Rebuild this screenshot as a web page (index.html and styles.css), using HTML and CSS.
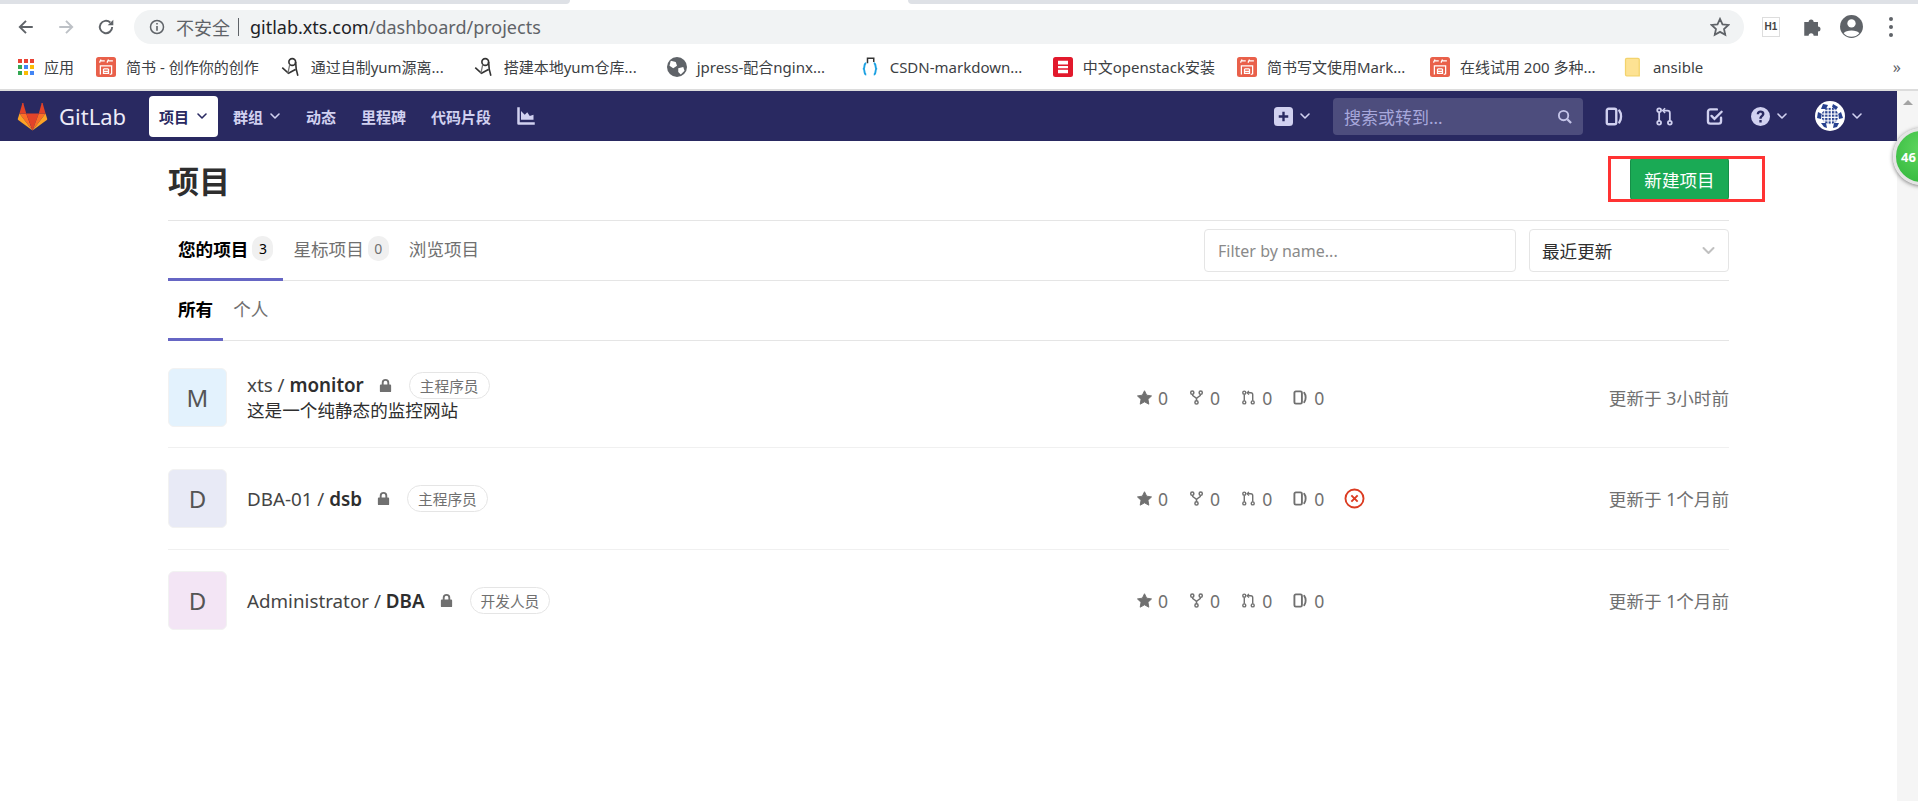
FILE: index.html
```html
<!DOCTYPE html>
<html lang="zh-CN">
<head>
  <meta charset="UTF-8">
  <title>项目 · GitLab</title>
  <link rel="stylesheet" href="styles.css">
</head>
<body>

<svg class="sprites" width="0" height="0">
  <symbol id="i-issues" viewBox="0 0 16 16"><path d="M3 1.500h5A1.500 1.500 0 0 1 9.500 3v10A1.500 1.500 0 0 1 8 14.500H3A1.500 1.500 0 0 1 1.500 13V3A1.500 1.500 0 0 1 3 1.500z" fill="none" stroke="currentColor" stroke-width="2"/><path d="M12 3c2 2.500 2 7.500 0 10" fill="none" stroke="currentColor" stroke-width="2" stroke-linecap="round"/></symbol>
  <symbol id="i-mr" viewBox="0 0 16 16"><g fill="none" stroke="currentColor" stroke-width="1.500"><circle cx="3.500" cy="2.800" r="1.600"/><circle cx="3.500" cy="13.200" r="1.600"/><circle cx="12.500" cy="13.200" r="1.600"/><path d="M3.500 4.500v7M12.500 11.500V5a2 2 0 0 0-2-2H7"/><path d="M8.500 1L6.500 3l2 2" stroke-width="1.300"/></g></symbol>
  <symbol id="i-todo" viewBox="0 0 16 16"><path d="M13.500 9v3a2 2 0 0 1-2 2h-7a2 2 0 0 1-2-2V4a2 2 0 0 1 2-2H10" fill="none" stroke="currentColor" stroke-width="2" stroke-linecap="round"/><path d="M5.500 7.500L8 10l6-6" fill="none" stroke="currentColor" stroke-width="2" stroke-linecap="round"/></symbol>
  <symbol id="i-chevron" viewBox="0 0 12 12"><path d="M2 4l4 4 4-4" fill="none" stroke="currentColor" stroke-width="1.600" stroke-linecap="round" stroke-linejoin="round"/></symbol>
  <symbol id="i-lock" viewBox="0 0 16 16"><path d="M3 7h1V5a4 4 0 0 1 8 0v2h1a1 1 0 0 1 1 1v6a1 1 0 0 1-1 1H3a1 1 0 0 1-1-1V8a1 1 0 0 1 1-1zm3 0h4V5a2 2 0 0 0-4 0z" fill="currentColor" fill-rule="evenodd"/></symbol>
  <symbol id="i-star" viewBox="0 0 16 16"><path d="M8 .8l2.300 4.700 5.200.8-3.800 3.600.9 5.200L8 12.600l-4.600 2.500.9-5.200L.5 6.300l5.200-.8z" fill="currentColor" stroke="currentColor" stroke-linejoin="round"/></symbol>
  <symbol id="i-fork" viewBox="0 0 16 16"><g fill="none" stroke="currentColor" stroke-width="1.600"><circle cx="3.500" cy="2.800" r="1.700"/><circle cx="12.500" cy="2.800" r="1.700"/><circle cx="8" cy="13.200" r="1.700"/><path d="M3.500 4.500c0 3 4.500 2.500 4.500 5v2M12.500 4.500c0 3-4.500 2.500-4.500 5"/></g></symbol>
  <symbol id="i-bm-jianshu" viewBox="0 0 16 16"><rect width="16" height="16" rx="2" fill="#e9604a"/><path d="M3.500 6.500V14M3.500 7h9v6.500l-1.500.5M6 9.500h4M6 11.500h4M6 9.500v3.500h4V9.500M4 2L2.800 4.500M4 3h3M10 2L8.800 4.500M10 3h3.500" fill="none" stroke="#fff" stroke-width="1"/></symbol>
  <symbol id="i-bm-feather" viewBox="0 0 16 16"><circle cx="9" cy="4" r="2.700" fill="none" stroke="#333" stroke-width="1.300"/><path d="M11.700 4c0 4 .5 7 1.800 11M1 8.500l5 4.500 5.500-3" fill="none" stroke="#333" stroke-width="1.300"/><path d="M7 6L5.500 13" stroke="#777" stroke-width="1"/></symbol>
</svg>

<div class="tabstrip"><span class="tab-active"></span></div>

<div class="toolbar">
  <svg class="tb-icon" viewBox="0 0 16 16"><path d="M14 8H3M8 2.500L2.500 8 8 13.500" fill="none" stroke="#5f6368" stroke-width="1.700"/></svg>
  <svg class="tb-icon" viewBox="0 0 16 16"><path d="M2 8h11M8 2.500L13.500 8 8 13.500" fill="none" stroke="#bdc1c6" stroke-width="1.700"/></svg>
  <svg class="tb-icon" viewBox="0 0 16 16"><path d="M13.500 8A5.500 5.500 0 1 1 11.800 4" fill="none" stroke="#5f6368" stroke-width="1.700"/><path d="M14.500 1.500v5h-5z" fill="#5f6368"/></svg>
  <div class="omnibox">
    <svg class="omni-info" viewBox="0 0 16 16"><circle cx="8" cy="8" r="6.500" fill="none" stroke="#5f6368" stroke-width="1.500"/><path d="M7.200 7h1.600v4.800H7.200zM7.200 4h1.600v1.600H7.200z" fill="#5f6368"/></svg>
    <span class="omni-warn">不安全</span><span class="omni-sep"></span>
    <span class="omni-url"><b>gitlab.xts.com</b>/dashboard/projects</span>
    <svg class="omni-star" viewBox="0 0 16 16"><path d="M8 1.500l2 4.400 4.700.5-3.500 3.200 1 4.700L8 11.900l-4.200 2.400 1-4.700L1.300 6.400 6 5.900z" fill="none" stroke="#5f6368" stroke-width="1.400"/></svg>
  </div>
  <span class="ext-h1">H1</span>
  <svg class="tb-puzzle" viewBox="0 0 16 16"><path d="M1 4h3.500a2 2 0 1 1 4 0H12v3.500a2 2 0 1 1 0 4V15H8.500a2 2 0 1 0-4 0H1z" fill="#5f6368"/></svg>
  <svg class="tb-profile" viewBox="0 0 24 24"><circle cx="12" cy="12" r="11" fill="#5f6368"/><circle cx="12" cy="9" r="4" fill="#fff"/><path d="M4.500 18.500c2-3.500 13-3.500 15 0a10 10 0 0 1-15 0z" fill="#fff"/></svg>
  <span class="tb-dots"><i></i><i></i><i></i></span>
</div>

<div class="bookmarks">
  <span class="bm"><span class="apps-grid"><i class="r"></i><i class="r"></i><i class="r"></i><i class="g"></i><i class="b"></i><i class="y"></i><i class="g"></i><i class="y"></i><i class="b"></i></span>应用</span>
  <span class="bm"><svg class="bm-icon"><use href="#i-bm-jianshu"/></svg>简书 - 创作你的创作</span>
  <span class="bm bm-long"><svg class="bm-icon"><use href="#i-bm-feather"/></svg>通过自制yum源离...</span>
  <span class="bm bm-long"><svg class="bm-icon"><use href="#i-bm-feather"/></svg>搭建本地yum仓库...</span>
  <span class="bm bm-long"><svg class="bm-icon" viewBox="0 0 16 16"><circle cx="8" cy="8" r="8" fill="#5f6368"/><path d="M3 3l4 1 1 3-3 2-3-2zM9 9l4-1 1 3-3 3-2-2z" fill="#fff"/></svg>jpress-配合nginx...</span>
  <span class="bm bm-long"><svg class="bm-icon" viewBox="0 0 16 16"><path d="M5 5c-2 0-1 3-2 4.500 1 1 0 4.500 2 4.500M11 5c2 0 1 3 2 4.500-1 1 0 4.500-2 4.500" fill="none" stroke="#1ba1e2" stroke-width="1.500"/><path d="M6 5V1h5v3" fill="none" stroke="#333" stroke-width="1.200"/></svg>CSDN-markdown...</span>
  <span class="bm"><svg class="bm-icon" viewBox="0 0 16 16"><rect width="16" height="16" rx="2" fill="#e2192c"/><rect x="4" y="3" width="8" height="10" fill="#fff"/><path d="M0 6.500h16M0 9.500h16" stroke="#e2192c" stroke-width="1.200"/></svg>中文openstack安装</span>
  <span class="bm bm-long"><svg class="bm-icon"><use href="#i-bm-jianshu"/></svg>简书写文使用Mark...</span>
  <span class="bm bm-long"><svg class="bm-icon"><use href="#i-bm-jianshu"/></svg>在线试用 200 多种...</span>
  <span class="bm"><svg class="bm-icon" viewBox="0 0 16 16"><path d="M2 2a1 1 0 0 1 1-1h9a1 1 0 0 1 1 1v13H3a1 1 0 0 1-1-1z" fill="#fde293" stroke="#f3d36c"/></svg>ansible</span>
  <span class="bm-more">»</span>
</div>

<div class="app">
  <div class="app-main">
    <nav class="navbar">
      <svg class="logo" viewBox="0 0 32 30">
        <path d="M16 29.500L2.500 12h7z" fill="#fc6d26"/>
        <path d="M2.500 12L5.500 1.400c.2-.5.800-.5 1 0L9.500 12z" fill="#e24329"/>
        <path d="M16 29.500L9.500 12h13z" fill="#e24329"/>
        <path d="M16 29.500L22.500 12h7z" fill="#fc6d26"/>
        <path d="M16 29.500l14.800-10.800a1.200 1.200 0 0 0 .4-1.300L29.500 12z" fill="#fca326"/>
        <path d="M2.500 12l-1.700 5.400a1.200 1.200 0 0 0 .4 1.300L16 29.500z" fill="#fca326"/>
        <path d="M29.500 12L26.500 1.400c-.2-.5-.8-.5-1 0L22.500 12z" fill="#e24329"/>
      </svg>
      <span class="brand">GitLab</span>
      <a class="nav-item active">项目<svg class="chev"><use href="#i-chevron"/></svg></a>
      <a class="nav-item">群组<svg class="chev"><use href="#i-chevron"/></svg></a>
      <a class="nav-item">动态</a>
      <a class="nav-item">里程碑</a>
      <a class="nav-item">代码片段</a>
      <a class="nav-item"><svg class="nav-chart" viewBox="0 0 16 16"><path d="M1 1h2v12h12v2H2a1 1 0 0 1-1-1z" fill="currentColor"/><path d="M4 11V4l3 3 2-2 2 3 3-1v4z" fill="currentColor"/></svg></a>
      <div class="nav-right">
        <span class="nav-plus"><svg class="nav-ico" viewBox="0 0 16 16"><path fill-rule="evenodd" d="M3 0h10a3 3 0 0 1 3 3v10a3 3 0 0 1-3 3H3a3 3 0 0 1-3-3V3a3 3 0 0 1 3-3zm4 4v3H4v2h3v3h2V9h3V7H9V4z" fill="currentColor"/></svg><svg class="chev"><use href="#i-chevron"/></svg></span>
        <div class="search">
          <span>搜索或转到...</span>
          <svg class="search-ico" viewBox="0 0 16 16"><circle cx="7" cy="7" r="5" fill="none" stroke="currentColor" stroke-width="2"/><path d="M11 11l4 4" stroke="currentColor" stroke-width="2.400"/></svg>
        </div>
        <svg class="nav-ico ico-issues"><use href="#i-issues"/></svg>
        <svg class="nav-ico ico-mr"><use href="#i-mr"/></svg>
        <svg class="nav-ico ico-todo"><use href="#i-todo"/></svg>
        <span class="nav-help"><svg class="nav-ico" viewBox="0 0 16 16"><path fill-rule="evenodd" d="M8 0a8 8 0 1 1 0 16A8 8 0 0 1 8 0zM7 11v2h2v-2zM4.800 6h2c.1-.8.500-1.200 1.200-1.200s1.200.4 1.200 1c0 1.300-2.200 1.400-2.200 4h2c0-1.800 2.300-2 2.300-4.200C11.300 3.900 9.900 3 8 3 6.100 3 4.900 4.100 4.800 6z" fill="currentColor"/></svg><svg class="chev"><use href="#i-chevron"/></svg></span>
        <span class="nav-user">
          <svg class="user-avatar" viewBox="0 0 30 30">
            <defs>
              <pattern id="lattice" width="3.400" height="3.400" patternUnits="userSpaceOnUse"><rect width="3.400" height="3.400" fill="#fff"/><rect width="2.200" height="2.200" fill="#27418f"/></pattern>
            </defs>
            <circle cx="15" cy="15" r="15" fill="#fff"/>
            <path d="M8 3l5 1-2 4-5 0zM18 3l5 3-2 3-4-3zM3 11l4 2-1 5-4-1zM26 11l2 6-4 1-1-5zM6 22l5 0 1 5-3-1zM19 22l5 0-2 4-4 1z" fill="#27418f"/>
            <circle cx="15" cy="15" r="8.500" fill="url(#lattice)"/>
          </svg>
          <svg class="chev"><use href="#i-chevron"/></svg>
        </span>
      </div>
    </nav>

    <main class="page">
      <header class="page-head">
        <h1>项目</h1>
        <a class="btn-new">新建项目</a>
      </header>

      <div class="tabs-row">
        <ul class="tabs">
          <li class="on">您的项目<span class="badge">3</span></li>
          <li>星标项目<span class="badge">0</span></li>
          <li>浏览项目</li>
        </ul>
        <div class="filters">
          <div class="filter-input">Filter by name...</div>
          <div class="filter-select">最近更新<svg class="chev"><use href="#i-chevron"/></svg></div>
        </div>
      </div>

      <ul class="tabs tabs-sub">
        <li class="on">所有</li>
        <li>个人</li>
      </ul>

      <ul class="projects">
        <li class="project">
          <span class="avatar av-blue">M</span>
          <div class="project-info">
            <div class="project-title">
              <span class="name">xts / <b>monitor</b></span>
              <svg class="lock"><use href="#i-lock"/></svg>
              <span class="role">主程序员</span>
            </div>
            <p class="desc">这是一个纯静态的监控网站</p>
          </div>
          <div class="stats">
            <span class="stat"><svg><use href="#i-star"/></svg>0</span>
            <span class="stat"><svg><use href="#i-fork"/></svg>0</span>
            <span class="stat"><svg><use href="#i-mr"/></svg>0</span>
            <span class="stat"><svg><use href="#i-issues"/></svg>0</span>
            <span class="ci-slot"></span>
          </div>
          <span class="updated">更新于 3小时前</span>
        </li>
        <li class="project">
          <span class="avatar av-indigo">D</span>
          <div class="project-info">
            <div class="project-title">
              <span class="name">DBA-01 / <b>dsb</b></span>
              <svg class="lock"><use href="#i-lock"/></svg>
              <span class="role">主程序员</span>
            </div>
          </div>
          <div class="stats">
            <span class="stat"><svg><use href="#i-star"/></svg>0</span>
            <span class="stat"><svg><use href="#i-fork"/></svg>0</span>
            <span class="stat"><svg><use href="#i-mr"/></svg>0</span>
            <span class="stat"><svg><use href="#i-issues"/></svg>0</span>
            <span class="ci-slot"><svg viewBox="0 0 20 20"><circle cx="10" cy="10" r="8.600" fill="none" stroke="#db3b21" stroke-width="1.800"/><path d="M7 7l6 6M13 7l-6 6" stroke="#db3b21" stroke-width="1.800"/></svg></span>
          </div>
          <span class="updated">更新于 1个月前</span>
        </li>
        <li class="project">
          <span class="avatar av-pink">D</span>
          <div class="project-info">
            <div class="project-title">
              <span class="name">Administrator / <b>DBA</b></span>
              <svg class="lock"><use href="#i-lock"/></svg>
              <span class="role">开发人员</span>
            </div>
          </div>
          <div class="stats">
            <span class="stat"><svg><use href="#i-star"/></svg>0</span>
            <span class="stat"><svg><use href="#i-fork"/></svg>0</span>
            <span class="stat"><svg><use href="#i-mr"/></svg>0</span>
            <span class="stat"><svg><use href="#i-issues"/></svg>0</span>
            <span class="ci-slot"></span>
          </div>
          <span class="updated">更新于 1个月前</span>
        </li>
      </ul>
    </main>
  </div>

  <div class="scrollbar"><span class="scroll-up"></span></div>
  <span class="float-ball">46</span>
  <span class="red-box"></span>
</div>

</body>
</html>
```

FILE: styles.css
```css
* {
  box-sizing: border-box;
}

html, body {
  height: 100%;
}

body {
  margin: 0;
  font-family: "Noto Sans", "Noto Sans CJK SC", sans-serif;
  font-size: 14px;
  color: #2e2e2e;
  background: #fff;
  overflow: hidden;
  display: flex;
  flex-direction: column;
}

.sprites {
  position: absolute;
}

ul {
  list-style: none;
  margin: 0;
  padding: 0;
}

/* browser frame */
.tabstrip {
  height: 9px;
  flex: none;
  display: flex;
}

.tabstrip::before,
.tabstrip::after {
  content: "";
  height: 4px;
  background: #dee1e6;
}

.tabstrip::before {
  width: 570px;
  border-bottom-right-radius: 5px;
}

.tabstrip::after {
  flex: 1;
  border-bottom-left-radius: 5px;
}

.tab-active {
  width: 338px;
}

.toolbar {
  height: 35px;
  flex: none;
  display: flex;
  align-items: center;
  padding-left: 17px;
}

.tb-icon {
  width: 18px;
  height: 18px;
  margin-right: 22px;
}

.tb-icon:nth-child(3) {
  margin-right: 19px;
}

.omnibox {
  width: 1610px;
  height: 34px;
  border-radius: 17px;
  background: #f1f3f4;
  display: flex;
  align-items: center;
  padding: 0 14px 0 15px;
  font-size: 18px;
  color: #5f6368;
}

.omni-info {
  width: 16px;
  height: 16px;
  margin-right: 11px;
}

.omni-sep {
  width: 1px;
  height: 18px;
  background: #5f6368;
  margin: 0 11px 0 8px;
}

.omni-url b {
  font-weight: 400;
  color: #202124;
}

.omni-star {
  width: 20px;
  height: 20px;
  margin-left: auto;
}

.ext-h1 {
  width: 18px;
  height: 20px;
  margin-left: 18px;
  border: 1px solid #ddd;
  font: bold 10px/18px "Liberation Sans", sans-serif;
  text-align: center;
  color: #444;
}

.tb-puzzle {
  width: 20px;
  height: 20px;
  margin-left: 23px;
}

.tb-profile {
  width: 25px;
  height: 25px;
  margin-left: 16px;
}

.tb-dots {
  display: flex;
  flex-direction: column;
  gap: 4px;
  margin-left: 25px;
}

.tb-dots i {
  width: 4px;
  height: 4px;
  border-radius: 50%;
  background: #5f6368;
}

.bookmarks {
  height: 47px;
  flex: none;
  display: flex;
  align-items: center;
  padding-left: 18px;
  border-bottom: 2px solid #dcdcdc;
  font-size: 15px;
  color: #3c4043;
}

.bm {
  display: flex;
  align-items: center;
  gap: 10px;
  margin-right: 22px;
  white-space: nowrap;
}

/* elided bookmarks all get the same button width */
.bm-long {
  width: 193px;
  margin-right: 0;
}

.bm-icon {
  width: 20px;
  height: 20px;
  flex: none;
}

.apps-grid {
  display: grid;
  grid-template-columns: repeat(3, 4px);
  gap: 2px;
}

.apps-grid i {
  height: 4px;
}

.apps-grid .r { background: #ea4335; }
.apps-grid .g { background: #34a853; }
.apps-grid .b { background: #4285f4; }
.apps-grid .y { background: #fbbc05; }

.bm-more {
  margin-left: auto;
  margin-right: 17px;
  font-size: 16px;
  color: #5f6368;
}

/* gitlab app */
.app {
  flex: 1;
  display: flex;
  position: relative;
  min-height: 0;
}

.app-main {
  flex: 1;
  min-width: 0;
}

.navbar {
  height: 50px;
  background: #292961;
  display: flex;
  align-items: center;
  padding-left: 17px;
  color: #d1d1f0;
}

.logo {
  width: 31px;
  height: 29px;
}

.brand {
  margin-left: 11px;
  margin-right: 23px;
  font-size: 22px;
  color: #ecebf8;
}

.nav-item {
  height: 41px;
  display: flex;
  align-items: center;
  padding: 0 10px;
  margin-right: 5px;
  border-radius: 4px;
  font-size: 15px;
  font-weight: 700;
}

.nav-item.active {
  background: #fff;
  color: #292961;
}

.chev {
  width: 12px;
  height: 12px;
  margin-left: 6px;
}

.nav-item.active .chev {
  margin-left: 7px;
}

.nav-chart {
  width: 20px;
  height: 20px;
}

.nav-right {
  margin-left: auto;
  display: flex;
  align-items: center;
  padding-right: 34px;
}

.nav-plus,
.nav-help,
.nav-user {
  display: flex;
  align-items: center;
}

.nav-ico {
  width: 19px;
  height: 19px;
}

.search {
  width: 250px;
  height: 37px;
  margin: 0 22px 0 22px;
  padding: 0 11px;
  border-radius: 4px;
  background: #4d4d7d;
  display: flex;
  align-items: center;
  justify-content: space-between;
  font-size: 17px;
  color: #a8a8dc;
}

.search-ico {
  width: 15px;
  height: 15px;
  color: #c4c4e8;
}

.ico-mr,
.ico-todo {
  margin-left: 31px;
}

.nav-help {
  margin-left: 27px;
}

.nav-user {
  margin-left: 27px;
}

.user-avatar {
  width: 30px;
  height: 30px;
}

.page {
  padding: 0 168px;
}

.page-head {
  height: 80px;
  border-bottom: 1px solid #e5e5e5;
  display: flex;
  align-items: center;
  justify-content: space-between;
}

.page-head h1 {
  margin: 2px 0 0;
  font-size: 31px;
  font-weight: 700;
  line-height: 1;
}

.btn-new {
  width: 99px;
  height: 44px;
  margin-top: -3px;
  border-radius: 4px;
  border: 1px solid #168f48;
  background: #1aaa55;
  color: #fff;
  font-size: 17.6px;
  display: flex;
  align-items: center;
  justify-content: center;
}

.tabs-row {
  display: flex;
  justify-content: space-between;
  height: 60px;
  border-bottom: 1px solid #e5e5e5;
}

.tabs {
  display: flex;
}

.tabs li {
  height: 60px;
  padding: 0 10px 2px;
  display: flex;
  align-items: center;
  font-size: 17.6px;
  color: #707070;
  border-bottom: 3px solid transparent;
}

.tabs li.on {
  color: #000;
  font-weight: 700;
  border-bottom-color: #6666c4;
}

.badge {
  width: 21px;
  height: 25px;
  margin-left: 4px;
  border-radius: 10px;
  background: #f0f0f0;
  font-size: 14px;
  font-weight: 400;
  display: flex;
  align-items: center;
  justify-content: center;
}

.tabs-sub {
  height: 60px;
  border-bottom: 1px solid #e5e5e5;
}

.filters {
  display: flex;
  gap: 13px;
  padding-top: 8px;
}

.filter-input,
.filter-select {
  height: 43px;
  border: 1px solid #e5e5e5;
  border-radius: 4px;
  display: flex;
  align-items: center;
  font-size: 16px;
}

.filter-input {
  width: 312px;
  padding-left: 13px;
  color: #8a8a8a;
}

.filter-select {
  width: 200px;
  padding: 0 12px;
  justify-content: space-between;
  font-size: 17.6px;
  color: #2e2e2e;
}

.filter-select .chev {
  color: #c0c0c0;
  width: 15px;
  height: 15px;
}

.project {
  display: flex;
  align-items: center;
  padding: 21px 0;
  border-bottom: 1px solid #f0f0f0;
}

.project:first-child {
  padding: 27px 0 20px;
}

.project:last-child {
  border-bottom: 0;
}

.avatar {
  width: 59px;
  height: 59px;
  flex: none;
  border: 1px solid #f2f2f2;
  border-radius: 6px;
  display: flex;
  align-items: center;
  justify-content: center;
  font-size: 24px;
  color: #555;
}

.av-blue { background: #e3f2fd; }
.av-indigo { background: #e8eaf6; }
.av-pink { background: #f3e5f5; }

.project-info {
  margin-left: 20px;
  flex: 1;
}

.project-title {
  display: flex;
  align-items: center;
  height: 24px;
}

.name {
  font-size: 18.8px;
  color: #444;
}

.name b {
  font-weight: 600;
  color: #2e2e2e;
}

.lock {
  width: 15px;
  height: 15px;
  margin: 0 0 0 14px;
  color: #707070;
}

.role {
  height: 27px;
  margin-left: 16px;
  padding: 0 10px;
  border: 1px solid #e5e5e5;
  border-radius: 14px;
  display: flex;
  align-items: center;
  font-size: 14.7px;
  color: #707070;
}

.desc {
  margin: 1px 0 0;
  font-size: 17.6px;
  line-height: 24px;
  color: #2e2e2e;
}

.stats {
  display: flex;
  align-items: center;
  gap: 21px;
  width: 409px;
  font-size: 17.6px;
  color: #707070;
}

.stat {
  display: flex;
  align-items: center;
  gap: 6px;
}

.stat svg {
  width: 15px;
  height: 15px;
}

.ci-slot {
  display: flex;
}

.ci-slot svg {
  width: 21px;
  height: 21px;
  margin-left: -1px;
}

.updated {
  width: 140px;
  margin-left: 43px;
  text-align: right;
  font-size: 17.6px;
  color: #707070;
  white-space: nowrap;
}

.scrollbar {
  width: 21px;
  flex: none;
  background: #f5f5f5;
  display: flex;
  justify-content: center;
  padding-top: 9px;
}

.scroll-up {
  width: 0;
  height: 0;
  border: 5px solid transparent;
  border-top: 0;
  border-bottom-color: #a3a3a3;
}

/* overlays */
.float-ball {
  position: absolute;
  left: 1893px;
  top: 37px;
  width: 57px;
  height: 57px;
  border-radius: 50%;
  border: 3px solid #e4e4e4;
  background: radial-gradient(circle at 50% 35%, #5fd65f, #2fb53a);
  box-shadow: 0 1px 4px #777;
  padding-left: 5px;
  display: flex;
  align-items: center;
  color: #fff;
  font-size: 13px;
  font-weight: 700;
}

.red-box {
  position: absolute;
  left: 1608px;
  top: 65px;
  width: 157px;
  height: 46px;
  border: 3px solid #f33;
}
```
